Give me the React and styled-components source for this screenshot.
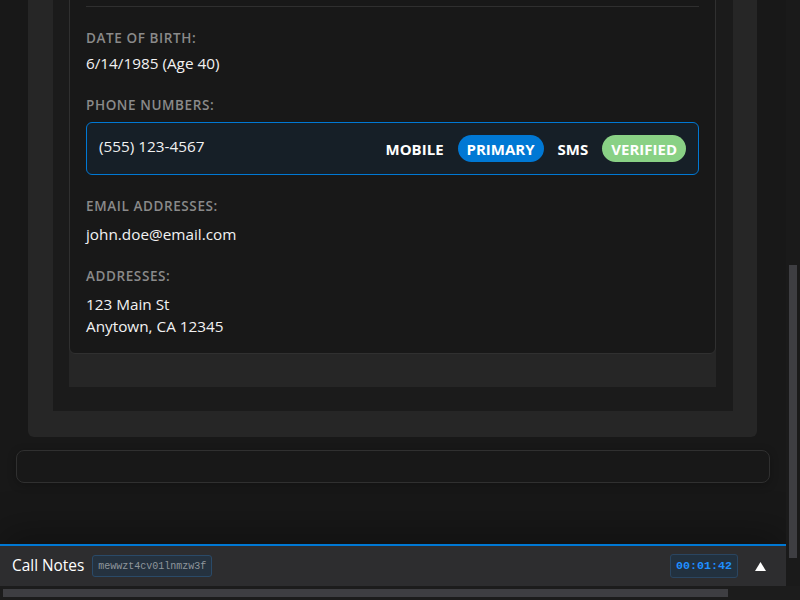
import React from "react";
import styled, { createGlobalStyle } from "styled-components";

const Global = createGlobalStyle`
  html, body { margin: 0; padding: 0; background: #181818; }
  body { font-family: "Open Sans", "Noto Sans", sans-serif; color: #e8e8e8; }
  * { box-sizing: border-box; }
`;

const Screen = styled.div`
  width: 800px;
  height: 600px;
  display: grid;
  grid-template-columns: 786px 14px;
  grid-template-rows: 586px 14px;
  overflow: hidden;
  background: #181818;
`;

const Viewport = styled.div`
  display: flex;
  flex-direction: column;
  overflow: hidden;
`;

const ScrollArea = styled.div`
  flex: 1;
  min-height: 0;
  display: flex;
  flex-direction: column;
  justify-content: flex-end;
  overflow: hidden;
  padding: 0 16px 61px;
  background: #181818;
  & > * { flex-shrink: 0; }
`;

const OuterPanel = styled.div`
  margin: 0 13px 13px 12px;
  padding: 0 24px 26px 25px;
  background: #262626;
  border-radius: 0 0 6px 6px;
`;

const InnerPanel = styled.div`
  padding: 0 17px 24px 16px;
  background: #1b1b1b;
`;

const CardWell = styled.div`
  padding-bottom: 33px;
  background: #262626;
`;

const Card = styled.div`
  background: #181818;
  border: 1px solid #303030;
  border-radius: 6px;
  padding: 0 16px;
`;

const CardHeader = styled.div`
  height: 48px;
  border-bottom: 1px solid #2f2f2f;
`;

const CardBody = styled.div`
  display: flex;
  flex-direction: column;
  gap: 22px;
  padding: 22px 0 16px;
`;

const Section = styled.div`
  display: flex;
  flex-direction: column;
`;

const Label = styled.div`
  font-size: 13.5px;
  line-height: 18px;
  font-weight: 600;
  letter-spacing: 0.6px;
  text-transform: uppercase;
  color: #8a8a8a;
  margin-bottom: 5px;
`;

const Value = styled.div`
  font-size: 15.3px;
  line-height: 22px;
  color: #f2f2f2;
`;

const List = styled.div`
  display: flex;
  flex-direction: column;
  padding-top: 3px;
`;

const PhoneRow = styled.div`
  display: flex;
  align-items: flex-start;
  justify-content: space-between;
  padding: 12px;
  border: 1px solid #0078d4;
  border-radius: 6px;
  background: rgba(0, 120, 212, 0.08);
`;

const Tags = styled.div`
  display: flex;
  align-items: center;
  gap: 5px;
`;

const Tag = styled.span`
  display: inline-flex;
  align-items: center;
  height: 27px;
  padding: 0 9px;
  border-radius: 14px;
  font-size: 15px;
  font-weight: 700;
  color: #ffffff;
  background: ${(p) => p.$bg || "transparent"};
`;

const BottomBox = styled.div`
  height: 33px;
  border: 1px solid #303030;
  border-radius: 8px;
  background: #181818;
  box-shadow: 0 2px 8px rgba(0, 0, 0, 0.25);
`;

const NotesBar = styled.div`
  height: 42px;
  flex-shrink: 0;
  display: flex;
  align-items: center;
  gap: 8px;
  padding: 0 12px;
  background: #2d2d2f;
  border-top: 2px solid #0078d4;
  box-shadow: 0 -10px 40px rgba(0, 0, 0, 0.35);
  position: relative;
`;

const NotesTitle = styled.span`
  font-size: 15.4px;
  line-height: 22px;
  color: #ffffff;
`;

const SessionId = styled.span`
  display: inline-flex;
  align-items: center;
  height: 22px;
  padding: 0 5px;
  font-family: "Liberation Mono", "DejaVu Sans Mono", monospace;
  font-size: 10px;
  color: #8f969c;
  background: #25323f;
  border: 1px solid #2a4a68;
  border-radius: 3px;
`;

const Spacer = styled.div`
  flex: 1;
`;

const Timer = styled.span`
  display: inline-flex;
  align-items: center;
  height: 24px;
  padding: 0 5px;
  font-family: "Liberation Mono", "DejaVu Sans Mono", monospace;
  font-size: 11.7px;
  font-weight: 700;
  color: #1f8fff;
  background: #22313f;
  border: 1px solid #2a4560;
  border-radius: 3px;
`;

const ToggleButton = styled.button`
  width: 28px;
  height: 28px;
  display: flex;
  align-items: center;
  justify-content: center;
  padding: 0;
  border: none;
  background: transparent;
`;

const VTrack = styled.div`
  background: #1a1a1a;
  padding: 265px 3px 0;
`;

const VThumb = styled.div`
  height: 293px;
  background: #3e3e42;
`;

const HTrack = styled.div`
  background: #1c1c1c;
  padding: 3px 0 3px 3px;
`;

const HThumb = styled.div`
  width: 725px;
  height: 8px;
  background: #3e3e42;
`;

const Corner = styled.div`
  background: #1c1c1c;
`;

export default function App() {
  return (
    <>
      <Global />
      <Screen>
        <Viewport>
          <ScrollArea>
            <OuterPanel>
              <InnerPanel>
                <CardWell>
                  <Card>
                    <CardHeader />
                    <CardBody>
                      <Section>
                        <Label>Date of Birth:</Label>
                        <Value>6/14/1985 (Age 40)</Value>
                      </Section>
                      <Section>
                        <Label>Phone Numbers:</Label>
                        <List>
                          <PhoneRow>
                            <Value>(555) 123-4567</Value>
                            <Tags>
                              <Tag>MOBILE</Tag>
                              <Tag $bg="#0078d4">PRIMARY</Tag>
                              <Tag>SMS</Tag>
                              <Tag $bg="#89d185">VERIFIED</Tag>
                            </Tags>
                          </PhoneRow>
                        </List>
                      </Section>
                      <Section>
                        <Label>Email Addresses:</Label>
                        <List>
                          <Value>john.doe@email.com</Value>
                        </List>
                      </Section>
                      <Section>
                        <Label>Addresses:</Label>
                        <List>
                          <Value>123 Main St</Value>
                          <Value>Anytown, CA 12345</Value>
                        </List>
                      </Section>
                    </CardBody>
                  </Card>
                </CardWell>
              </InnerPanel>
            </OuterPanel>
            <BottomBox />
          </ScrollArea>
          <NotesBar>
            <NotesTitle>Call Notes</NotesTitle>
            <SessionId>mewwzt4cv01lnmzw3f</SessionId>
            <Spacer />
            <Timer>00:01:42</Timer>
            <ToggleButton aria-label="Expand">
              <svg width="11" height="9" viewBox="0 0 11 9">
                <polygon points="5.5,0 11,9 0,9" fill="#ffffff" />
              </svg>
            </ToggleButton>
          </NotesBar>
        </Viewport>
        <VTrack>
          <VThumb />
        </VTrack>
        <HTrack>
          <HThumb />
        </HTrack>
        <Corner />
      </Screen>
    </>
  );
}
